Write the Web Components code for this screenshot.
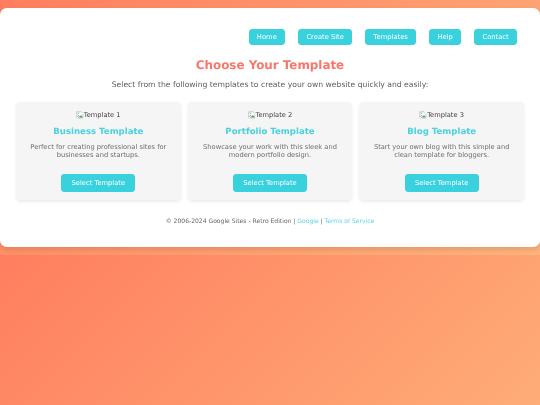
<!DOCTYPE html>
<html><head><meta charset="utf-8"><style>
html{background:linear-gradient(135deg,#ff7e5f,#feb47b);}
body{margin:0;padding:8px 0;font-family:"DejaVu Sans",sans-serif;color:#333;text-rendering:geometricPrecision;}
</style></head><body>
<site-panel>
<site-nav slot="nav"><nav-link>Home</nav-link><nav-link>Create Site</nav-link><nav-link>Templates</nav-link><nav-link>Help</nav-link><nav-link>Contact</nav-link></site-nav>
<template-card n="1" name="Business Template">Perfect for creating professional sites for businesses and startups.</template-card>
<template-card n="2" name="Portfolio Template">Showcase your work with this sleek and modern portfolio design.</template-card>
<template-card n="3" name="Blog Template">Start your own blog with this simple and clean template for bloggers.</template-card>
</site-panel>
<script>
function def(n,html){customElements.define(n,class extends HTMLElement{connectedCallback(){if(this.shadowRoot)return;const s=this.attachShadow({mode:'open'});s.innerHTML=typeof html==='function'?html(this):html;}});}
def('nav-link',`<style>:host{display:block;background:#3ad1df;color:#fff;font-size:6.75px;line-height:8px;padding:4.15px 8.3px;border-radius:3.4px}
</style><slot></slot>`);
def('site-nav',`<style>:host{display:flex;justify-content:flex-end;gap:13px;padding-right:9.5px}</style><slot></slot>`);
def('template-card',h=>`<style>:host{display:block;flex:1 1 0;min-width:0;background:#f5f5f5;border-radius:4.5px;box-shadow:0 1.5px 3.500px rgba(0,0,0,.08);padding:7.5px 10px 8.5px;text-align:center}
.img{font-size:6.66px;line-height:10px;height:10px;color:#444;display:flex;justify-content:center;align-items:flex-start}
svg{width:7.700px;height:7.700px;flex:none;margin-top:1px}
h3{margin:7px 0 0;font-size:8.6px;line-height:10px;font-weight:700;color:#4ad2e0}
p{margin:6px 0 0;font-size:6.7px;line-height:8.3px;color:#6e6e6e}
button{display:block;margin:14.4px auto 0;background:#3ad1df;color:#fff;border:0;font:6.73px "DejaVu Sans",sans-serif;line-height:8px;padding:5px 10.25px;border-radius:3.4px;text-rendering:geometricPrecision}
</style><div class="img"><svg viewBox="0 0 16 16"><path d="M1.5 1.5h9l4 4v9h-13z" fill="#fff" stroke="#9a9a9a"/><path d="M2.5 12l3-4 2.5 2.5L10 8l3.500 4v1.500h-11z" fill="#5ba55b"/><path d="M3 3h4v3H3z" fill="#a9c9ee"/><path d="M0 15L15 2l1 1-14 13z" fill="#fff"/></svg><span>Template ${h.getAttribute('n')}</span></div><h3>${h.getAttribute('name')}</h3><p><slot></slot></p><button>Select Template</button>`);
def('site-panel',`<style>:host{display:block;background:#fff;border-radius:6.75px;padding:21px 13.500px 0;height:239px;box-sizing:border-box;box-shadow:0 2.7px 5.4px rgba(0,0,0,.1)}
.blur{filter:blur(.25px)}
h1{margin:12.7px 0 0;text-align:center;font-size:11.9px;line-height:14px;color:#f8766a;font-weight:700}
.sub{margin:8.5px 0 0;text-align:center;font-size:7.66px;line-height:9px;color:#5e5e5e}
.cards{display:flex;gap:7px;margin:13px 2.500px 0}
footer{margin:18px 0 0;text-align:center;font-size:6.05px;line-height:8px;color:#666}
a{color:#5ad4e2;text-decoration:none}
</style><div class="blur"><slot name="nav"></slot><h1>Choose Your Template</h1><div class="sub">Select from the following templates to create your own website quickly and easily:</div><div class="cards"><slot></slot></div><footer>© 2006-2024 Google Sites - Retro Edition | <a href="#">Google</a> | <a href="#">Terms of Service</a></footer></div>`);
</script>
</body></html>
